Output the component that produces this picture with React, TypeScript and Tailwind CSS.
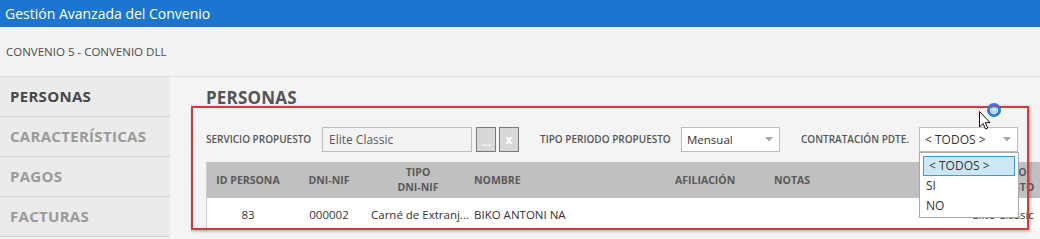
import React from "react";

const Arrow = () => (
  <svg width="8" height="5" viewBox="0 0 8 5" className="shrink-0">
    <path d="M0 0 L8 0 L4 4.5 Z" fill="#a8a8a8" />
  </svg>
);

export default function App() {
  const font = { fontFamily: "'Open Sans', 'Noto Sans', sans-serif" };
  return (
    <div
      className="relative w-[1040px] h-[239px] overflow-hidden bg-[#f4f4f4] text-[#555]"
      style={font}
    >
      <div className="h-[27px] bg-[#1c76d1] text-white text-[14px] pl-[5px] flex items-center leading-none">
        Gestión Avanzada del Convenio
      </div>
      <div className="h-[49px] flex items-center pl-[6px] text-[11.5px] text-[#4a4a4a] bg-[#f3f3f3]">
        CONVENIO 5 - CONVENIO DLL
      </div>
      <div className="flex">
        <div className="w-[170px] shrink-0 bg-[#ebebeb] border-t border-[#dadada]">
          {[
            ["PERSONAS", "text-[#474747]"],
            ["CARACTERÍSTICAS", "text-[#9a9a9a]"],
            ["PAGOS", "text-[#9a9a9a]"],
            ["FACTURAS", "text-[#9a9a9a]"],
          ].map(([t, c]) => (
            <div
              key={t}
              className={`h-[40px] border-b border-[#d2d2d2] flex items-center pl-[10px] font-bold text-[15px] tracking-[0.3px] ${c}`}
            >
              {t}
            </div>
          ))}
        </div>
        <div className="flex-1 min-w-0 border-t border-[#dcdcdc] pl-[36px]">
          <div className="mt-[11px] h-[20px] flex items-center font-bold text-[17px] tracking-[0.2px] text-[#555]">
            PERSONAS
          </div>
          <div className="mt-[19px] h-[25px] flex items-center">
            <div className="w-[116px] text-[10px] font-semibold text-[#555] whitespace-nowrap">SERVICIO PROPUESTO</div>
            <div className="w-[150px] h-[25px] border border-[#bdbdbd] bg-[#f3f3f3] flex items-center pl-[6px] text-[12px] text-[#5a5a5a]">
              Elite Classic
            </div>
            <div className="ml-[4px] w-[20px] h-[25px] border border-[#7a7a7a] bg-[#d8d8d8] flex items-end justify-center pb-[4px] text-white font-bold text-[10px] leading-none">
              ...
            </div>
            <div className="ml-[3px] w-[20px] h-[25px] border border-[#7a7a7a] bg-[#d8d8d8] flex items-center justify-center text-white font-bold text-[12px] leading-none">
              x
            </div>
            <div className="ml-[21px] w-[141px] text-[10px] font-semibold text-[#555] whitespace-nowrap">TIPO PERIODO PROPUESTO</div>
            <div className="w-[99px] h-[25px] border border-[#bdbdbd] bg-white flex items-center justify-between pl-[5px] pr-[6px] text-[11.5px] text-[#333]">
              <span>Mensual</span>
              <Arrow />
            </div>
            <div className="ml-[21px] w-[118px] text-[10px] font-semibold text-[#555] whitespace-nowrap">CONTRATACIÓN PDTE.</div>
            <div className="w-[99px] h-[25px] border border-[#bdbdbd] bg-white flex items-center justify-between pl-[5px] pr-[6px] text-[12px] text-[#333]">
              <span>&lt; TODOS &gt;</span>
              <Arrow />
            </div>
          </div>
          <div className="mt-[10px] w-[900px] border-l border-[#cfcfcf]">
            <div className="h-[36px] bg-[#c0c0c0] flex items-center text-[10.5px] font-bold text-[#5a5a5a] leading-[15px]">
              <div className="w-[82px] text-center">ID PERSONA</div>
              <div className="w-[80px] text-center">DNI-NIF</div>
              <div className="w-[98px] text-center">
                TIPO
                <br />
                DNI-NIF
              </div>
              <div className="w-[201px] pl-[7px]">NOMBRE</div>
              <div className="w-[99px] pl-[7px]">AFILIACIÓN</div>
              <div className="w-[200px] pl-[7px]">NOTAS</div>
              <div className="w-[72px] text-center">
                SERVICIO
                <br />
                PROPUESTO
              </div>
            </div>
            <div className="h-[33px] bg-white flex items-center text-[11.5px] text-[#333]">
              <div className="w-[82px] text-center">83</div>
              <div className="w-[80px] text-center">000002</div>
              <div className="w-[98px] pl-[2px] whitespace-nowrap">Carné de Extranj...</div>
              <div className="w-[201px] pl-[7px]">BIKO ANTONI NA</div>
              <div className="w-[99px]" />
              <div className="w-[200px]" />
              <div className="w-[72px] text-center whitespace-nowrap">Elite Classic</div>
            </div>
          </div>
        </div>
      </div>

      {/* annotation box */}
      <div className="absolute left-[191px] top-[106px] w-[838px] h-[124px] border-2 border-[#d23c3c] shadow-[1px_1px_3px_rgba(0,0,0,0.35)] pointer-events-none" />

      {/* open dropdown list */}
      <div className="absolute left-[919px] top-[152px] w-[100px] h-[66px] bg-white border border-[#a9a9a9] text-[12px] text-[#333]">
        <div className="mx-[3px] mt-[3px] h-[20px] bg-[#cce8f6] border border-[#3d9ad6] flex items-center pl-[5px]">
          &lt; TODOS &gt;
        </div>
        <div className="h-[20px] flex items-center pl-[6px]">SI</div>
        <div className="h-[20px] flex items-center pl-[6px]">NO</div>
      </div>

      {/* cursor with busy ring */}
      <svg className="absolute left-[975px] top-[100px]" width="30" height="32" viewBox="0 0 30 32">
        <defs>
          <radialGradient id="rg" cx="50%" cy="50%" r="50%">
            <stop offset="0%" stopColor="#d8ecff" />
            <stop offset="100%" stopColor="#8fc3f3" />
          </radialGradient>
        </defs>
        <circle cx="19" cy="10" r="5.5" fill="none" stroke="#2b7fd6" strokeWidth="3" />
        <circle cx="19" cy="10" r="3.2" fill="url(#rg)" opacity="0.8" />
        <path
          d="M4.5 11.5 L4.5 27 L8 23.5 L10.5 29 L12.8 28 L10.3 22.6 L15 22.6 Z"
          fill="#fff"
          stroke="#111"
          strokeWidth="1"
          strokeLinejoin="round"
        />
      </svg>
    </div>
  );
}
